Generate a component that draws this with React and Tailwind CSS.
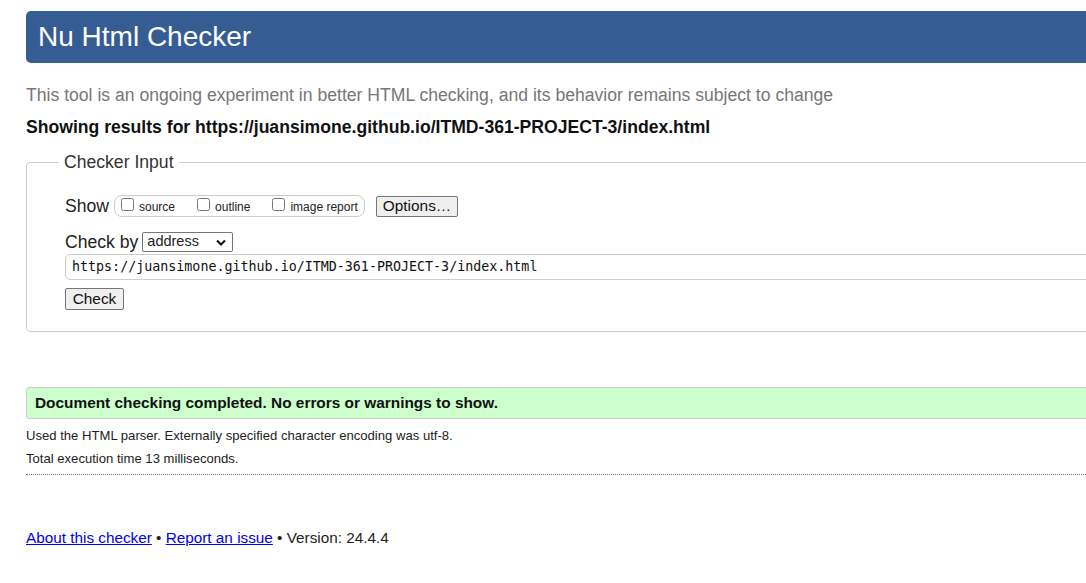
export default function App() {
  const sans = { fontFamily: '"Liberation Sans", Arial, sans-serif' };
  return (
    <div className="w-[1086px] h-[583px] overflow-hidden bg-white text-[#222]" style={sans}>
      <div className="ml-[26px] w-[1140px] pt-[11px]">
        <div className="h-[52px] rounded-[5px] bg-[#365c94] pl-[12px] flex items-center">
          <h1 className="text-[28px] text-white leading-none font-normal">Nu Html Checker</h1>
        </div>
        <p className="mt-[21px] text-[17.6px] leading-[22px] text-[#777]">
          This tool is an ongoing experiment in better HTML checking, and its behavior remains subject to change
        </p>
        <p className="mt-[11px] text-[17.6px] leading-[20px] font-bold text-[#111]">
          Showing results for https://juansimone.github.io/ITMD-361-PROJECT-3/index.html
        </p>
        <div className="relative mt-[25px] h-[170px] border border-[#ccc] rounded-[4px]">
          <div className="absolute left-[32px] top-[-12px] bg-white px-[5px] text-[17.6px] leading-[22px] text-[#333]">
            Checker Input
          </div>
          <div className="pl-[38px] pt-[32px]">
            <div className="flex items-center h-[22px]">
              <span className="text-[17.6px] text-[#222] mr-[5px]">Show</span>
              <div className="flex items-center h-[22px] border border-[#ccc] rounded-[8px] pl-[6px] pr-[6px] w-[251px]">
                <input type="checkbox" className="w-[13px] h-[13px] m-0 mr-[5px] -mt-[4px]" />
                <span className="text-[12px] mt-[2px]">source</span>
                <input type="checkbox" className="w-[13px] h-[13px] m-0 ml-[22px] mr-[5px] -mt-[4px]" />
                <span className="text-[12px] mt-[2px]">outline</span>
                <input type="checkbox" className="w-[13px] h-[13px] m-0 ml-[22px] mr-[5px] -mt-[4px]" />
                <span className="text-[12px] mt-[2px]">image report</span>
              </div>
              <button className="ml-[11px] h-[21px] w-[82px] bg-[#efefef] border border-[#767676] rounded-[2px] text-[15.4px] leading-none text-[#111]">
                Options…
              </button>
            </div>
            <div className="flex items-center mt-[15px] h-[20px]">
              <span className="text-[17.6px] mr-[4px]">Check by</span>
              <div className="relative w-[91px] h-[20px] border border-[#767676] rounded-[2px] flex items-center pl-[4px] text-[14.5px]">
                address
                <svg className="absolute right-[6px] top-[6px]" width="10" height="7" viewBox="0 0 10 7">
                  <path d="M1 1.5 L5 5.5 L9 1.5" fill="none" stroke="#111" strokeWidth="2" />
                </svg>
              </div>
            </div>
            <div
              className="mt-[2px] h-[26px] border border-[#ccc] rounded-[5px] flex items-center pl-[6px] text-[13.33px] text-[#111]"
              style={{ fontFamily: '"DejaVu Sans Mono", "Liberation Mono", monospace' }}
            >
              https://juansimone.github.io/ITMD-361-PROJECT-3/index.html
            </div>
            <button className="mt-[8px] h-[22px] w-[59px] bg-[#efefef] border border-[#767676] rounded-[2px] text-[15.4px] leading-none text-[#111]">
              Check
            </button>
          </div>
        </div>
        <div className="mt-[55px] h-[32px] bg-[#ccffcc] border border-[#ccc] rounded-[3px] flex items-center pl-[8px] text-[15.4px] font-bold text-[#111]">
          Document checking completed. No errors or warnings to show.
        </div>
        <p className="mt-[9px] text-[13.1px] leading-[16px] text-[#222]">
          Used the HTML parser. Externally specified character encoding was utf-8.
        </p>
        <p className="mt-[7px] text-[13.1px] leading-[16px] text-[#222]">Total execution time 13 milliseconds.</p>
        <div className="mt-[7px] border-t border-dotted border-[#777]"></div>
        <p className="mt-[54px] text-[15.3px] leading-[18px] text-[#222]">
          <a href="#" className="text-[#0000ee] underline">About this checker</a>
          {" • "}
          <a href="#" className="text-[#0000ee] underline">Report an issue</a>
          {" • Version: 24.4.4"}
        </p>
      </div>
    </div>
  );
}
